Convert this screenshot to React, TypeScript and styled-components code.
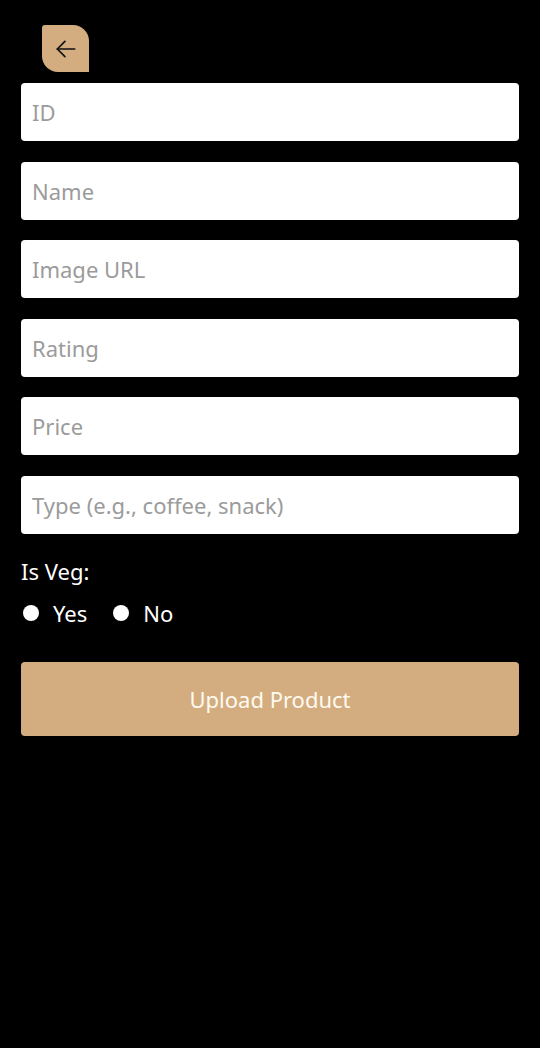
import React from "react";
import styled, { createGlobalStyle } from "styled-components";

const Global = createGlobalStyle`
  html, body { margin: 0; padding: 0; background: #000; }
  body { font-family: "Noto Sans", "Open Sans", sans-serif; }
  * { box-sizing: border-box; }
`;

const Page = styled.div`
  min-height: 1048px;
  background: #000;
  padding: 25px 21px 0 21px;
  display: flex;
  flex-direction: column;
`;

const BackButton = styled.button`
  width: 47px;
  height: 47px;
  margin-left: 21px;
  border: none;
  padding: 0;
  background: #d3ad80;
  border-radius: 3px 16px 0 16px;
  display: flex;
  align-items: center;
  justify-content: center;
  cursor: pointer;
`;

const Form = styled.div`
  margin-top: 11px;
  display: flex;
  flex-direction: column;
  gap: 20.6px;
`;

const Input = styled.input`
  width: 100%;
  height: 58px;
  border: none;
  border-radius: 4px;
  background: #fff;
  padding: 0 11px;
  font-family: "Noto Sans", "Open Sans", sans-serif;
  font-size: 22px;
  color: #222;
  outline: none;
  &::placeholder { color: #9b9b9b; }
`;

const Label = styled.div`
  margin-top: 22px;
  color: #fff;
  font-size: 22px;
  line-height: 30px;
`;

const RadioRow = styled.div`
  margin-top: 12px;
  display: flex;
  align-items: center;
  gap: 24px;
`;

const RadioOption = styled.label`
  display: flex;
  align-items: center;
  gap: 14px;
  color: #fff;
  font-size: 22px;
  line-height: 30px;
`;

const Dot = styled.span`
  width: 16px;
  height: 16px;
  border-radius: 50%;
  background: #fff;
  margin-left: 2px;
`;

const Submit = styled.button`
  margin-top: 34px;
  height: 74px;
  width: 100%;
  border: none;
  border-radius: 4px;
  background: #d3ad80;
  color: #fffaf0;
  font-family: "Noto Sans", "Open Sans", sans-serif;
  font-size: 22px;
  cursor: pointer;
`;

export default function App() {
  return (
    <>
      <Global />
      <Page>
        <BackButton aria-label="Back">
          <svg width="26" height="26" viewBox="0 0 24 24" fill="none" stroke="#111" strokeWidth="1.6" strokeLinecap="round" strokeLinejoin="round">
            <path d="M20 12H4" />
            <path d="M11 5l-7 7 7 7" />
          </svg>
        </BackButton>
        <Form>
          <Input placeholder="ID" />
          <Input placeholder="Name" />
          <Input placeholder="Image URL" />
          <Input placeholder="Rating" />
          <Input placeholder="Price" />
          <Input placeholder="Type (e.g., coffee, snack)" />
        </Form>
        <Label>Is Veg:</Label>
        <RadioRow>
          <RadioOption><Dot />Yes</RadioOption>
          <RadioOption><Dot />No</RadioOption>
        </RadioRow>
        <Submit>Upload Product</Submit>
      </Page>
    </>
  );
}
